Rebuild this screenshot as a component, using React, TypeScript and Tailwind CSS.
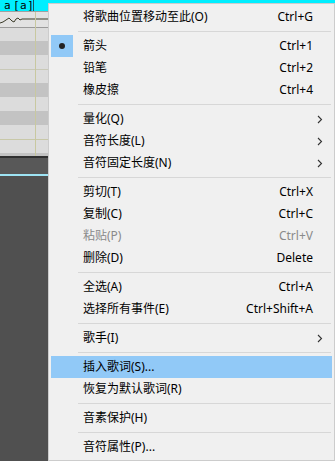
import React from "react";

type Item =
  | { sep: true }
  | {
      sep?: false;
      label: string;
      shortcut?: string;
      sub?: boolean;
      checked?: boolean;
      disabled?: boolean;
      hot?: boolean;
    };

const items: Item[] = [
  { label: "将歌曲位置移动至此(O)", shortcut: "Ctrl+G" },
  { sep: true },
  { label: "箭头", shortcut: "Ctrl+1", checked: true },
  { label: "铅笔", shortcut: "Ctrl+2" },
  { label: "橡皮擦", shortcut: "Ctrl+4" },
  { sep: true },
  { label: "量化(Q)", sub: true },
  { label: "音符长度(L)", sub: true },
  { label: "音符固定长度(N)", sub: true },
  { sep: true },
  { label: "剪切(T)", shortcut: "Ctrl+X" },
  { label: "复制(C)", shortcut: "Ctrl+C" },
  { label: "粘贴(P)", shortcut: "Ctrl+V", disabled: true },
  { label: "删除(D)", shortcut: "Delete" },
  { sep: true },
  { label: "全选(A)", shortcut: "Ctrl+A" },
  { label: "选择所有事件(E)", shortcut: "Ctrl+Shift+A" },
  { sep: true },
  { label: "歌手(I)", sub: true },
  { sep: true },
  { label: "插入歌词(S)...", hot: true },
  { label: "恢复为默认歌词(R)" },
  { sep: true },
  { label: "音素保护(H)" },
  { sep: true },
  { label: "音符属性(P)..." },
];

function Chevron() {
  return (
    <svg width="6" height="9" viewBox="0 0 6 9" className="absolute right-[9px] top-[7px]">
      <path d="M1 1 L4.5 4.5 L1 8" fill="none" stroke="#333" strokeWidth="1.1" />
    </svg>
  );
}

export default function App() {
  const font = {
    fontFamily: '"Noto Sans", "Noto Sans CJK SC", sans-serif',
  };
  const mono = { fontFamily: '"DejaVu Sans Mono", monospace' };
  return (
    <div className="relative w-[335px] h-[461px] overflow-hidden bg-[#505050]" style={font}>
      {/* background piano roll */}
      <div className="flex flex-col w-[335px]">
        <div className="h-[11px] bg-[#00eeff] flex items-center relative">
          <span className="text-[11px] leading-[11px] text-black pl-[4px] w-[13px]" style={mono}>
            a
          </span>
          <span className="text-[11px] leading-[11px] text-black tracking-[0.5px]" style={mono}>
            [a]
          </span>
          <div className="absolute left-[33px] top-0 h-[11px] w-px bg-[#1a5560]" />
        </div>
        <div className="h-px bg-[#a0a0a0]" />
        <div className="h-[15px] bg-[#e2e2e2] relative">
          <svg width="48" height="15" className="absolute left-0 top-0">
            <path
              d="M0 11 L3 10 L6 8 L9 6 L12 9 L14 10 L16 7 L18 6 L20 8 L22 7 L48 7"
              fill="none"
              stroke="#3a3a28"
              strokeWidth="1"
            />
          </svg>
        </div>
        <div className="h-px bg-[#9a9a9a]" />
        <div className="h-[13px] bg-[#dcdcdc]" />
        <div className="h-[14px] bg-[#c3c3c3]" />
        <div className="h-[14px] bg-[#dcdcdc]" />
        <div className="h-px bg-[#c9c9b8]" />
        <div className="h-[13px] bg-[#dcdcdc]" />
        <div className="h-[14px] bg-[#c3c3c3]" />
        <div className="h-[14px] bg-[#dcdcdc]" />
        <div className="h-[14px] bg-[#c3c3c3]" />
        <div className="h-[14px] bg-[#dcdcdc]" />
        <div className="h-px bg-[#c8c8a8]" />
        <div className="h-[13px] bg-[#dcdcdc]" />
        <div className="h-[3px] bg-[#c3c3c3]" />
        <div className="h-[2px] bg-[#303030]" />
        <div className="h-[16px] bg-[#585858]" />
        <div className="h-[2px] bg-[#9ee4f4]" />
        <div className="flex-1 bg-[#505050]" />
      </div>
      <div className="absolute left-[35px] top-[12px] w-px h-[144px] bg-[#c8c8a0]" />

      {/* context menu */}
      <div className="absolute left-[48px] top-[3px] w-[287px] bg-[#f0f0f0] border border-[#cccccc] pt-[2px] pb-[2px] text-[12px] text-black">
        {items.map((it, i) =>
          it.sep ? (
            <div key={i} className="h-[7px] flex items-center pl-[29px] pr-[3px]">
              <div className="h-px w-full bg-[#d7d7d7]" />
            </div>
          ) : (
            <div
              key={i}
              className={
                "relative h-[22px] mx-[2px] flex items-center pl-[32px] pr-[19px] " +
                (it.hot ? "bg-[#91c9f7]" : "")
              }
            >
              {it.checked && (
                <div className="absolute left-0 top-0 w-[22px] h-[22px] bg-[#91c9f7] flex items-center justify-center">
                  <div className="w-[6px] h-[6px] rounded-full bg-[#222]" />
                </div>
              )}
              <span className={"flex-1 whitespace-nowrap " + (it.disabled ? "text-[#8a8a8a]" : "")}>
                {it.label}
              </span>
              {it.shortcut && (
                <span className={"whitespace-nowrap " + (it.disabled ? "text-[#8a8a8a]" : "")}>
                  {it.shortcut}
                </span>
              )}
              {it.sub && <Chevron />}
            </div>
          )
        )}
      </div>
    </div>
  );
}
